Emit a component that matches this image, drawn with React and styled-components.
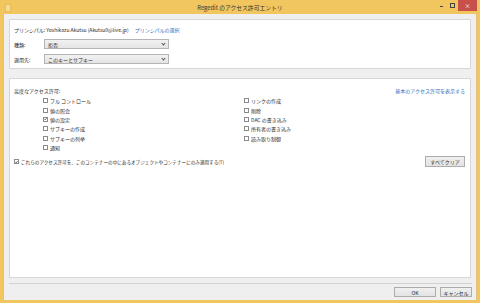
import styled, { createGlobalStyle } from "styled-components";

const GlobalStyle = createGlobalStyle`
  html, body {
    margin: 0;
    padding: 0;
    background: #f2c65e;
  }
  body {
    font-family: "Noto Sans CJK JP", "Noto Sans", sans-serif;
    color: #1e1e1e;
  }
`;

// Fenêtre complète avec son cadre jaune
const Window = styled.div`
  width: 480px;
  height: 303px;
  box-sizing: border-box;
  background: #f2c65e;
  display: flex;
  flex-direction: column;
  padding: 0 3px 4px 3px;
`;

const TitleBar = styled.div`
  height: 14px;
  display: grid;
  grid-template-columns: 1fr auto 1fr;
  align-items: start;
`;

const AppIcon = styled.div`
  width: 4px;
  height: 6px;
  margin: 4px 0 0 2px;
  background: #f7dc97;
  border: 1px solid #e8bd58;
`;

const Title = styled.div`
  font-size: 5.8px;
  line-height: 16px;
  color: #333;
  white-space: nowrap;
`;

const Controls = styled.div`
  display: flex;
  justify-content: flex-end;
  align-items: flex-start;
`;

const MinButton = styled.div`
  width: 11px;
  height: 11px;
  display: flex;
  align-items: center;
  justify-content: center;
  &::before {
    content: "";
    width: 3px;
    height: 1px;
    margin-top: 2px;
    background: #444;
  }
`;

const MaxButton = styled(MinButton)`
  &::before {
    width: 3px;
    height: 3px;
    margin-top: 0;
    background: transparent;
    border: 1px solid #444;
    border-top-width: 1.5px;
  }
`;

const CloseButton = styled.div`
  width: 19px;
  height: 11px;
  background: #c7504a;
  color: #fff;
  font-size: 6px;
  line-height: 11px;
  text-align: center;
`;

const Client = styled.div`
  flex: 1;
  background: #efefef;
  display: flex;
  flex-direction: column;
  padding: 5px 5px 0 5px;
  border-left: 1px solid #e2c27a;
  border-right: 1px solid #e2c27a;
`;

const Panel = styled.div`
  background: #fff;
  border: 1px solid #d7d7d7;
  box-sizing: border-box;
  padding: 0 5px 0 4px;
  height: ${(p) => p.$h}px;
  margin-bottom: ${(p) => p.$mb || 0}px;
  display: flex;
  flex-direction: column;
`;

const Text = styled.span`
  font-size: ${(p) => p.$size || 5}px;
  color: #2a2a2a;
  white-space: nowrap;
`;

const Link = styled(Text)`
  color: #2a6cc0;
`;

const PrincipalRow = styled.div`
  display: flex;
  gap: 6px;
  align-items: center;
  height: 9px;
  margin-top: 5px;
`;

const FieldRow = styled.div`
  display: grid;
  grid-template-columns: 30px 125px;
  align-items: center;
  margin-top: ${(p) => p.$mt}px;
`;

const Select = styled.div`
  height: 10px;
  box-sizing: border-box;
  border: 1px solid #b4b4b4;
  background: linear-gradient(#f2f2f2, #e4e4e4);
  display: flex;
  align-items: center;
  justify-content: space-between;
  padding: 0 3px 0 3px;
`;

const Chevron = styled.span`
  width: 2px;
  height: 2px;
  border-right: 1px solid #555;
  border-bottom: 1px solid #555;
  transform: rotate(45deg);
  margin-top: -2px;
`;

const HeaderRow = styled.div`
  display: flex;
  justify-content: space-between;
  align-items: center;
  height: 9px;
  margin-top: 7px;
`;

const PermGrid = styled.div`
  display: grid;
  grid-template-columns: 201px auto;
  grid-auto-flow: column;
  grid-template-rows: repeat(6, 9.35px);
  padding-left: 29px;
  margin-top: 1px;
`;

const CheckLine = styled.label`
  display: flex;
  align-items: center;
  gap: 2px;
`;

const Box = styled.span`
  width: 5px;
  height: 5px;
  box-sizing: border-box;
  border: 1px solid #8a8a8a;
  background: #fff;
  display: inline-flex;
  align-items: center;
  justify-content: center;
  flex: none;
`;

const BottomRow = styled.div`
  display: flex;
  justify-content: space-between;
  align-items: center;
  margin-top: 4px;
`;

const Button = styled.div`
  width: ${(p) => p.$w}px;
  height: ${(p) => p.$h || 10}px;
  box-sizing: border-box;
  border: 1px solid #acacac;
  background: linear-gradient(#f0f0f0, #e3e3e3);
  display: flex;
  align-items: center;
  justify-content: center;
  font-size: 5px;
  white-space: nowrap;
`;

const Footer = styled.div`
  margin-top: 5px;
  border-top: 1px solid #d2d2d2;
  display: flex;
  justify-content: flex-end;
  gap: 4px;
  padding: 3px 0 3px 0;
  margin-right: -1px;
`;

const Check = ({ checked, label, size }) => (
  <CheckLine>
    <Box>
      {checked && (
        <svg width="4" height="4" viewBox="0 0 8 8">
          <path d="M1 4.2 L3.2 6.4 L7 1.5" fill="none" stroke="#222" strokeWidth="1.6" />
        </svg>
      )}
    </Box>
    <Text $size={size}>{label}</Text>
  </CheckLine>
);

const leftPerms = [
  ["フル コントロール", false],
  ["値の照会", false],
  ["値の設定", true],
  ["サブキーの作成", false],
  ["サブキーの列挙", false],
  ["通知", false],
];

const rightPerms = [
  ["リンクの作成", false],
  ["削除", false],
  ["DAC の書き込み", false],
  ["所有者の書き込み", false],
  ["読み取り制御", false],
];

const App = () => (
  <>
    <GlobalStyle />
    <Window>
      <TitleBar>
        <AppIcon />
        <Title>Regedit のアクセス許可エントリ</Title>
        <Controls>
          <MinButton />
          <MaxButton />
          <CloseButton>×</CloseButton>
        </Controls>
      </TitleBar>
      <Client>
        <Panel $h={50} $mb={9}>
          <PrincipalRow>
            <Text>プリンシパル: Yoshikazu Akutsu (Akutsu0@live.jp)</Text>
            <Link>プリンシパルの選択</Link>
          </PrincipalRow>
          <FieldRow $mt={5}>
            <Text>種類:</Text>
            <Select>
              <Text>拒否</Text>
              <Chevron />
            </Select>
          </FieldRow>
          <FieldRow $mt={5}>
            <Text>適用先:</Text>
            <Select>
              <Text>このキーとサブキー</Text>
              <Chevron />
            </Select>
          </FieldRow>
        </Panel>
        <Panel $h={200}>
          <HeaderRow>
            <Text>高度なアクセス許可:</Text>
            <Link>基本のアクセス許可を表示する</Link>
          </HeaderRow>
          <PermGrid>
            {leftPerms.map(([label, checked]) => (
              <Check key={label} label={label} checked={checked} />
            ))}
            {rightPerms.map(([label, checked]) => (
              <Check key={label} label={label} checked={checked} />
            ))}
          </PermGrid>
          <BottomRow>
            <Check
              checked
              size={4.6}
              label="これらのアクセス許可を、このコンテナーの中にあるオブジェクトやコンテナーにのみ適用する(T)"
            />
            <Button $w={40} $h={11}>
              すべてクリア
            </Button>
          </BottomRow>
        </Panel>
        <Footer>
          <Button $w={42}>OK</Button>
          <Button $w={32}>キャンセル</Button>
        </Footer>
      </Client>
    </Window>
  </>
);

export default App;
